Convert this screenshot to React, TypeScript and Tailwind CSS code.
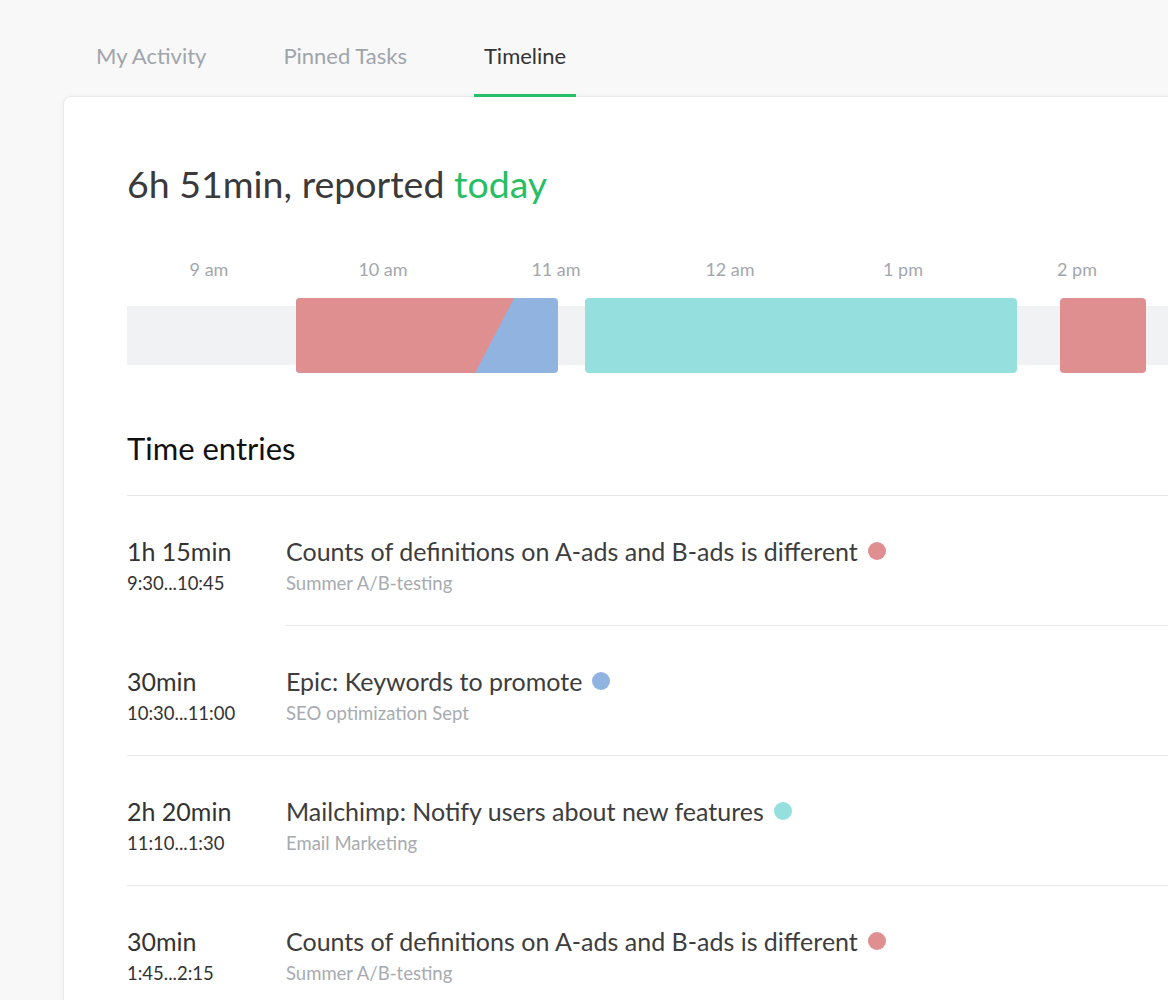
import React from "react"

// hour labels on the axis, x is relative to the card content edge
const hours = [
  { label: "9 am", x: 82 },
  { label: "10 am", x: 256 },
  { label: "11 am", x: 429 },
  { label: "12 am", x: 603 },
  { label: "1 pm", x: 776 },
  { label: "2 pm", x: 950 },
]

interface Entry {
  duration: string
  range: string
  title: string
  project: string
  dot: string
  indentLine?: boolean
}

const entries: Entry[] = [
  {
    duration: "1h 15min",
    range: "9:30...10:45",
    title: "Counts of definitions on A-ads and B-ads is different",
    project: "Summer A/B-testing",
    dot: "bg-[#df8f8f]",
    indentLine: true,
  },
  {
    duration: "30min",
    range: "10:30...11:00",
    title: "Epic: Keywords to promote",
    project: "SEO optimization Sept",
    dot: "bg-[#91b3e0]",
  },
  {
    duration: "2h 20min",
    range: "11:10...1:30",
    title: "Mailchimp: Notify users about new features",
    project: "Email Marketing",
    dot: "bg-[#95e0de]",
  },
  {
    duration: "30min",
    range: "1:45...2:15",
    title: "Counts of definitions on A-ads and B-ads is different",
    project: "Summer A/B-testing",
    dot: "bg-[#df8f8f]",
  },
]

const tabs = ["My Activity", "Pinned Tasks", "Timeline"]

function Tabs() {
  return (
    <div className="flex gap-[57px] pl-[86px]">
      {tabs.map((t) => {
        const active = t === "Timeline"
        return (
          <div
            key={t}
            className={
              "px-[10px] pt-[42px] pb-[24px] text-[22px] leading-[28px] border-b-[3px] " +
              (active ? "border-[#27be66] text-[#333]" : "border-transparent text-[#a0a5ab]")
            }
          >
            {t}
          </div>
        )
      })}
    </div>
  )
}

function Timeline() {
  return (
    <div>
      <div className="relative h-[24px] mt-[53px]">
        {hours.map((h) => (
          <span
            key={h.label}
            className="absolute top-0 -translate-x-1/2 whitespace-nowrap text-[18px] leading-[24px] text-[#a3a7ad]"
            style={{ left: h.x }}
          >
            {h.label}
          </span>
        ))}
      </div>

      <div className="relative h-[75px] mt-[17px]">
        <div className="absolute left-0 right-0 top-[8px] h-[59px] bg-[#f1f2f4]" />
        {/* 9:30 - 11:00, red overlapping blue */}
        <div className="absolute left-[169px] top-0 h-[75px] w-[262px] rounded-[4px] overflow-hidden bg-[#91b3e0]">
          <div className="h-full w-full bg-[#df8f8f] [clip-path:polygon(0_0,218px_0,179px_100%,0_100%)]" />
        </div>
        <div className="absolute left-[458px] top-0 h-[75px] w-[432px] rounded-[4px] bg-[#95e0de]" />
        <div className="absolute left-[933px] top-0 h-[75px] w-[86px] rounded-[4px] bg-[#df8f8f]" />
      </div>
    </div>
  )
}

function EntryRow({ e }: { e: Entry }) {
  return (
    <div className={e.indentLine ? "" : "border-b border-[#e8e8e8]"}>
      <div className="flex pt-[41px] pb-[30px]">
        <div className="w-[159px] shrink-0 text-[#333]">
          <div className="text-[25px] leading-[28px]">{e.duration}</div>
          <div className="text-[18.5px] leading-[24px] mt-[6px]">{e.range}</div>
        </div>
        <div>
          <div className="flex items-center text-[25px] leading-[28px] text-[#3d3d3d]">
            {e.title}
            <span className={"ml-[10px] inline-block w-[18px] h-[18px] rounded-full " + e.dot} />
          </div>
          <div className="text-[18.5px] leading-[24px] mt-[6px] text-[#a7abb0]">{e.project}</div>
        </div>
      </div>
      {e.indentLine && <div className="ml-[159px] border-b border-[#e8e8e8]" />}
    </div>
  )
}

export default function App() {
  return (
    <div className="min-h-[1000px] bg-[#f8f8f8] overflow-hidden font-['Lato','Liberation_Sans',sans-serif]">
      <Tabs />
      <div className="ml-[63px] -mt-px w-[1180px] min-h-[904px] bg-white border border-[#e9e9e9] rounded-tl-[8px] shadow-[0_0_5px_rgba(0,0,0,0.04)] pl-[63px] pt-[67px]">
        <h1 className="text-[37.5px] leading-[40px] text-[#3a3a3a]">
          6h 51min, reported <span className="text-[#27be66]">today</span>
        </h1>

        <Timeline />

        <h2 className="mt-[57px] text-[31px] leading-[36px] text-[#111]">Time entries</h2>
        <div className="mt-[29px] border-t border-[#e8e8e8]">
          {entries.map((e, i) => (
            <EntryRow key={i} e={e} />
          ))}
        </div>
      </div>
    </div>
  )
}
